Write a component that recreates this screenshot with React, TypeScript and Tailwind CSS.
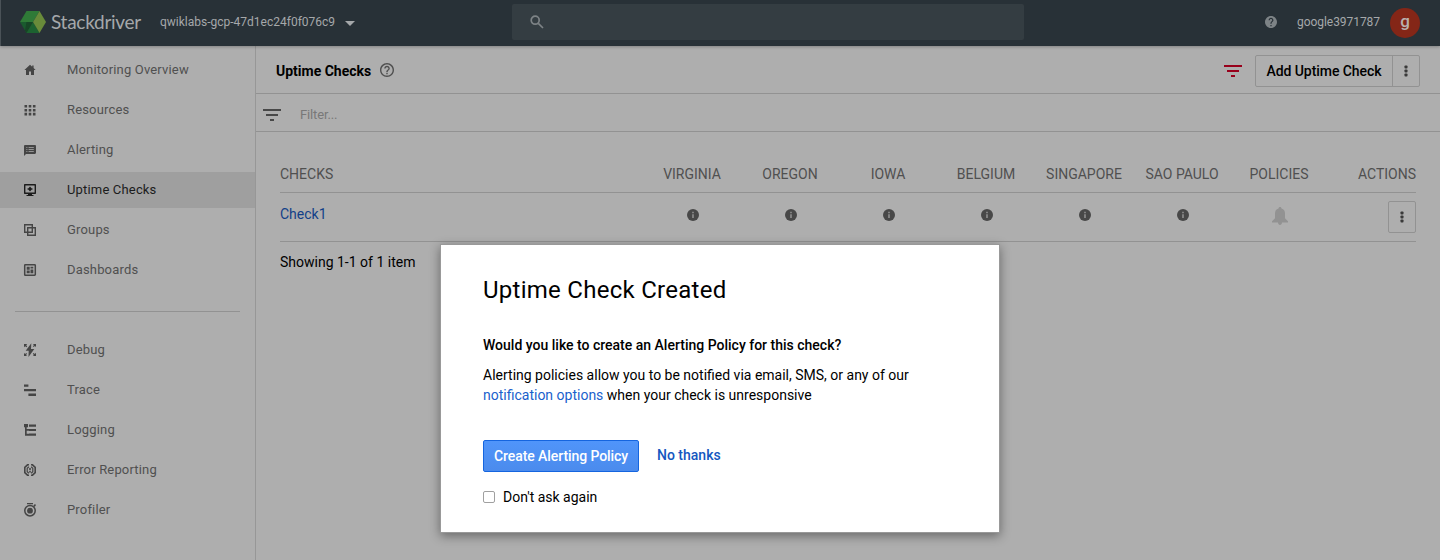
import React from "react";

const ROBOTO = "font-['Roboto',sans-serif]";

function Icon({ children, className = "" }: { children: React.ReactNode; className?: string }) {
  return (
    <svg width="12" height="12" viewBox="0 0 12 12" fill="currentColor" className={`shrink-0 ${className}`}>
      {children}
    </svg>
  );
}

const icons: Record<string, React.ReactNode> = {
  home: <path d="M6 .8 0.4 6H2v5h3V7.4h2V11h3V6h1.6L9.6 4.1V1.4H8.2v1.4z" />,
  grid: (
    <path d="M.5 1h2.6v2.6H.5zM4.7 1h2.6v2.6H4.7zM8.9 1h2.6v2.6H8.9zM.5 4.9h2.6v2.6H.5zM4.7 4.9h2.6v2.6H4.7zM8.9 4.9h2.6v2.6H8.9zM.5 8.8h2.6v2.6H.5zM4.7 8.8h2.6v2.6H4.7zM8.9 8.8h2.6v2.6H8.9z" />
  ),
  alert: (
    <path
      fillRule="evenodd"
      d="M1.2 1h9.6c.7 0 1.2.5 1.2 1.2v6.6c0 .7-.5 1.2-1.2 1.2H2L0 12V2.2C0 1.5.5 1 1.2 1zM2.3 3v.8h1.1V3zM4.6 3v.8h5.2V3zM2.3 5v.8h1.1V5zM4.6 5v.8h5.2V5zM2.3 7v.8h1.1V7zM4.6 7v.8h5.2V7z"
    />
  ),
  uptime: (
    <path
      fillRule="evenodd"
      d="M1 0h10c.6 0 1 .4 1 1v8c0 .6-.4 1-1 1H8v1h1.5v1h-7v-1H4v-1H1c-.6 0-1-.4-1-1V1c0-.6.4-1 1-1zm.4 1.5v7h9.2v-7zM6 2.5l1.5 1.7 1.7.8-1.7.8L6 7.500 4.500 5.800 2.800 5l1.700-.8z"
    />
  ),
  groups: (
    <g fill="none" stroke="currentColor" strokeWidth="1.4">
      <path d="M.7.7h7.600v7.600H.7z" />
      <path d="M3.700 3.700h7.600v7.600H3.700z" />
    </g>
  ),
  dash: (
    <>
      <rect x=".7" y=".7" width="10.6" height="10.6" rx=".7" fill="none" stroke="currentColor" strokeWidth="1.5" />
      <path d="M2.700 2.800h3v2.900h-3zM2.700 6.600h3v2.600h-3zM6.500 2.800h2.800v1.800H6.500zM6.500 5.400h2.800v3.800H6.500z" />
    </>
  ),
  debug: (
    <path d="M7.300-.8 1.700 6.800h3L4.500 13l5.800-8H7zM0 0h3.200L2.200 1.200l1 1.300-.8.800L1.200 2.200 0 3.200zM9 0h3v3l-1.200-.9-1 1-.9-.9 1-1zM0 9l1.200 1 1-1 .8.800-1 1.100L3.100 12H0zM12 8.800V12H8.900l1-1.100-1.100-1.100.9-.9 1.100 1z" />
  ),
  trace: <path d="M0 .4h4.400v2.400H0zM0 5h12v2.300H0zM4.400 9.600H12V12H4.400z" />,
  logging: <path d="M0 0h4v3.200H2.700V5H5v1.800H2.700v2.900H5v2H1V3.200H0zM5 .5h7v2.300H5zM5 5h7v2.100H5zM5 9.500h7v2.300H5z" />,
  error: (
    <>
      <path
        fill="none"
        stroke="currentColor"
        strokeWidth="1.600"
        d="M5 .8H3.500L.8 3.300v5.400l2.700 2.500H5M7 .8h1.500l2.700 2.500v5.400l-2.700 2.500H7"
      />
      <path fill="none" stroke="currentColor" strokeWidth="1.200" d="M4.900 2.700 3.200 4.200v3.600l1.700 1.500M7.100 2.700l1.700 1.500v3.600L7.100 9.300" />
      <path d="M5.200 3.900h1.600v2.400H5.200zM5.200 7h1.600v1.500H5.200z" />
    </>
  ),
  profiler: (
    <>
      <circle cx="6" cy="6.700" r="5.200" fill="none" stroke="currentColor" strokeWidth="1.500" />
      <circle cx="6" cy="6.700" r="2.900" />
      <path d="M3-1h6V.2H3zM9.300 1.700l1.600-1.600 1.100 1-1.300 1.800z" />
    </>
  ),
};

const mainNav = [
  ["home", "Monitoring Overview"],
  ["grid", "Resources"],
  ["alert", "Alerting"],
  ["uptime", "Uptime Checks"],
  ["groups", "Groups"],
  ["dash", "Dashboards"],
];
const toolNav = [
  ["debug", "Debug"],
  ["trace", "Trace"],
  ["logging", "Logging"],
  ["error", "Error Reporting"],
  ["profiler", "Profiler"],
];

function NavList({ items }: { items: string[][] }) {
  return (
    <ul className="flex flex-col gap-1">
      {items.map(([icon, label]) => (
        <li
          key={label}
          className={`flex h-9 items-center pl-6 text-[13px] tracking-[0.17px] ${
            label === "Uptime Checks" ? "bg-[#9f9f9f] text-[#1c1c1c]" : "text-[#505050]"
          }`}
        >
          <Icon className={`overflow-visible ${label === "Uptime Checks" ? "" : "text-[#454545]"}`}>{icons[icon]}</Icon>
          <span className="ml-[31px]">{label}</span>
        </li>
      ))}
    </ul>
  );
}

function FilterIcon({ className }: { className: string }) {
  return (
    <svg width="18" height="12" viewBox="0 0 18 12" fill="currentColor" className={className}>
      <path d="M0 0h18v2H0zM3 5h12v2H3zM7 10h4v2H7z" />
    </svg>
  );
}

function Dots() {
  return (
    <svg width="4" height="12" viewBox="0 0 4 12" fill="#3a3a3a">
      <rect x=".5" y=".5" width="3" height="3" rx=".8" />
      <rect x=".5" y="4.500" width="3" height="3" rx=".8" />
      <rect x=".5" y="8.500" width="3" height="3" rx=".8" />
    </svg>
  );
}

function Info() {
  return (
    <svg width="12" height="12" viewBox="0 0 12 12">
      <circle cx="6" cy="6" r="6" fill="#484848" />
      <path d="M5.300 2.800h1.400v1.400H5.300zM5.300 5.200h1.400V9H5.300z" fill="#999" />
    </svg>
  );
}

const regions = ["VIRGINIA", "OREGON", "IOWA", "BELGIUM", "SINGAPORE", "SAO PAULO"];
const columns = "grid grid-cols-[363px_repeat(6,98px)_96px_1fr]";

export default function App() {
  return (
    <div className={`relative flex h-[560px] w-[1440px] flex-col overflow-hidden bg-[#aeaeae] text-sm text-black ${ROBOTO}`}>
      <header className="z-10 flex h-[46px] shrink-0 items-center border-l border-[#4a5257] bg-[#283137] pl-[19px] pr-5 text-[#a5a8aa] shadow-[0_1px_3px_rgba(0,0,0,0.25)]">
        <svg width="26" height="22" viewBox="0 0 26 22" className="mt-[-2px] shrink-0">
          <path d="M6.500 0h13L13 11H0z" fill="#2f7a37" />
          <path d="M0 11h13L6.500 22z" fill="#1a5a2e" />
          <path d="M6.500 11H13L6.500 22 5 19.500z" fill="#174626" />
          <path d="M13 11 19.500 22h-13z" fill="#1c6230" />
          <path d="M19.500 0 26 11l-6.500 11L13 11z" fill="#698b3a" />
        </svg>
        <span className="ml-[5px] mt-[-3px] w-[109px] shrink-0 whitespace-nowrap font-['Lato',sans-serif] text-[19px] leading-6 tracking-[-0.27px]">
          Stackdriver
        </span>
        <span className="mt-[-2px] w-[185px] shrink-0 whitespace-nowrap text-xs">qwiklabs-gcp-47d1ec24f0f076c9</span>
        <svg width="10" height="5" viewBox="0 0 10 5" fill="currentColor" className="mt-px">
          <path d="M0 0h10L5 5z" />
        </svg>
        <div className="ml-[157px] mt-[-2px] flex h-9 w-[512px] items-center rounded-[2px] bg-[#343d42] pl-[18px]">
          <svg width="14" height="14" viewBox="0 0 14 14" fill="none" stroke="#7d8386" strokeWidth="1.700">
            <circle cx="5.200" cy="5.200" r="4" />
            <path d="m8.300 8.300 4.700 4.700" />
          </svg>
        </div>
        <svg width="12" height="12" viewBox="2 2 20 20" fill="#7d8386" className="ml-auto mt-[-2px]">
          <path d="M12 2C6.480 2 2 6.480 2 12s4.480 10 10 10 10-4.480 10-10S17.520 2 12 2zm1 17h-2v-2h2v2zm2.070-7.750-.9.920C13.450 12.900 13 13.500 13 15h-2v-.5c0-1.100.450-2.100 1.170-2.830l1.240-1.260c.370-.360.590-.860.590-1.410 0-1.100-.9-2-2-2s-2 .9-2 2H8c0-2.210 1.790-4 4-4s4 1.790 4 4c0 .880-.360 1.680-.930 2.250z" />
        </svg>
        <span className="ml-[20px] mt-[-2px] w-[93px] whitespace-nowrap text-xs tracking-[-0.05px]">google3971787</span>
        <span className="flex size-[30px] items-center justify-center rounded-full bg-[#842617] pb-[3px] text-[17px] font-medium text-[#b9b0ae]">
          g
        </span>
      </header>

      <div className="flex min-h-0 flex-1">
        <nav className="w-64 shrink-0 border-r border-[#979797] pt-[6px]">
          <NavList items={mainNav} />
          <hr className="mx-[15px] mb-5 mt-[23px] border-[#929292]" />
          <NavList items={toolNav} />
        </nav>
        <main className="flex min-w-0 flex-1 flex-col">
          <div className="flex h-12 shrink-0 items-center border-b border-[#929292] pl-5 pr-5">
            <h1 className="pt-[3px] font-bold">Uptime Checks</h1>
            <svg width="14" height="14" viewBox="2 2 20 20" fill="#505050" className="ml-[9px]">
              <path d="M11 18h2v-2h-2v2zm1-16C6.480 2 2 6.480 2 12s4.480 10 10 10 10-4.480 10-10S17.520 2 12 2zm0 18c-4.410 0-8-3.590-8-8s3.590-8 8-8 8 3.590 8 8-3.590 8-8 8zm0-14c-2.210 0-4 1.790-4 4h2c0-1.100.9-2 2-2s2 .9 2 2c0 2-3 1.750-3 5h2c0-2.250 3-2.500 3-5 0-2.210-1.790-4-4-4z" />
            </svg>
            <FilterIcon className="ml-auto mt-[2px] text-[#98001b]" />
            <div className="ml-[13px] mt-[2px] flex h-8 w-[165px] rounded-[2px] border border-[#929292] font-medium">
              <button className="w-[137px] border-r border-[#929292] tracking-[-0.06px]">Add Uptime Check</button>
              <button className="flex flex-1 items-center justify-center">
                <Dots />
              </button>
            </div>
          </div>
          <div className="flex h-[38px] shrink-0 items-center border-b border-[#929292] pl-[7px]">
            <FilterIcon className="mt-[5px] text-[#484848]" />
            <span className="ml-[19px] mt-[5px] text-[13px] tracking-[-0.15px] text-[#787878]">Filter...</span>
          </div>

          <section className="px-6 pt-[24px]">
            <div className={`${columns} h-[37px] items-center border-b border-[#929292] text-center text-[#505050]`}>
              <span className="text-left">CHECKS</span>
              {regions.map((r) => (
                <span key={r}>{r}</span>
              ))}
              <span>POLICIES</span>
              <span className="text-right">ACTIONS</span>
            </div>
            <div className={`${columns} h-[49px] items-center justify-items-center border-b border-[#929292]`}>
              <a className="mb-[7px] justify-self-start text-[#123f88]">Check1</a>
              {regions.map((r) => (
                <span key={r} className="mb-[5px] ml-[2px]">
                  <Info />
                </span>
              ))}
              <svg width="16" height="18" viewBox="0 0 16 18" fill="#929292" className="mb-[3px] ml-[2px]">
                <path d="M8 0c.9 0 1.500.7 1.500 1.500 2.400.7 3.500 2.500 3.500 5v4.800l3 3V15.500H0v-1.200l3-3V6.500c0-2.500 1.100-4.300 3.500-5C6.500.7 7.100 0 8 0zM6 15.500h4c0 1.500-.9 2.500-2 2.500s-2-1-2-2.500z" />
              </svg>
              <button className="flex h-8 w-7 items-center justify-center justify-self-end rounded-[2px] border border-[#929292]">
                <Dots />
              </button>
            </div>
            <p className="mt-[10px]">Showing 1-1 of 1 item</p>
          </section>
        </main>
      </div>

      <div
        role="dialog"
        className="absolute left-[440px] top-[244px] z-20 h-[289px] w-[560px] border border-[#999] bg-white px-[42px] pt-[29px] shadow-[0_3px_10px_rgba(0,0,0,0.4)]"
      >
        <h2 className="text-2xl leading-8 tracking-[0.27px]">Uptime Check Created</h2>
        <p className="mt-[29px] font-medium leading-5">Would you like to create an Alerting Policy for this check?</p>
        <p className="mt-[10px] leading-5">
          Alerting policies allow you to be notified via email, SMS, or any of our
          <br />
          <a className="text-[#1a5fcc]">notification options</a> when your check is unresponsive
        </p>
        <div className="mt-[35px] flex items-center">
          <button className="h-8 w-[156px] rounded-[2px] border border-[#1565df] bg-gradient-to-b from-[#5095fa] to-[#4b8bed] font-medium tracking-[-0.08px] text-white">
            Create Alerting Policy
          </button>
          <a className="mb-[2px] ml-[18px] font-medium text-[#1557c0]">No thanks</a>
        </div>
        <label className="mt-[15px] flex items-center leading-5">
          <input type="checkbox" className="size-3 appearance-none rounded-[2px] border border-[#a0a0a0] bg-white" />
          <span className="ml-2">Don't ask again</span>
        </label>
      </div>
    </div>
  );
}
